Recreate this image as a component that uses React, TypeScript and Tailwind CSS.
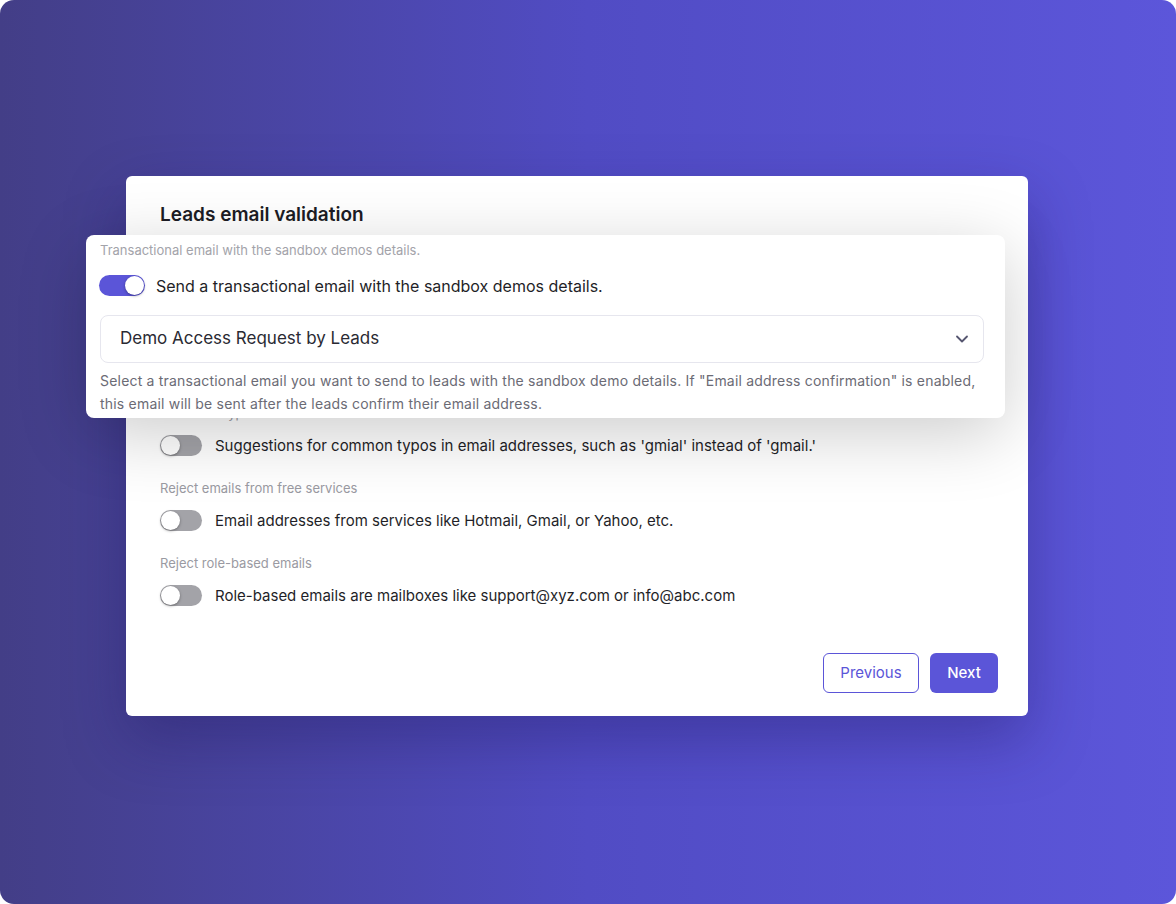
import { ChevronDown } from 'lucide-react'

const font = { fontFamily: 'Inter, "Noto Sans", sans-serif' }

function Toggle({ on }: { on?: boolean }) {
  return (
    <div className={`relative h-[21px] rounded-full shrink-0 ${on ? 'w-[46px] bg-[#5b55d8]' : 'w-[42px] bg-[#a3a3a8]'}`}>
      <div className={`absolute top-px w-[19px] h-[19px] rounded-full bg-white shadow-[0_1px_3px_rgba(0,0,0,0.35)] ${on ? 'right-px' : 'left-px'}`} />
    </div>
  )
}

// first two sit fully under the popup
const sections = [
  { label: 'Email address confirmation', text: 'Leads have to confirm their email address before accessing the sandbox demo.', covered: true },
  { label: 'Block disposable emails', text: 'Temporary email addresses from services like Mailinator or 10minutemail.', covered: true },
  { label: 'Check for typos', text: "Suggestions for common typos in email addresses, such as 'gmial' instead of 'gmail.'" },
  { label: 'Reject emails from free services', text: 'Email addresses from services like Hotmail, Gmail, or Yahoo, etc.' },
  { label: 'Reject role-based emails', text: 'Role-based emails are mailboxes like support@xyz.com or info@abc.com' },
]

export default function App() {
  return (
    <div className="w-[1176px] h-[904px] bg-white" style={font}>
      <div className="w-full h-full rounded-[14px] bg-gradient-to-r from-[#433e87] via-[#514cc4] to-[#5c56da] pt-[176px] pl-[126px]">

        {/* Card */}
        <div className="relative w-[902px] bg-white rounded-md shadow-[0_24px_60px_rgba(30,20,90,0.35)] pl-[34px] pr-[30px] pt-[28px] pb-[23px]">
          <h2 className="text-[19px] font-semibold text-[#1c1c24] leading-[22px]">Leads email validation</h2>

          <div className="mt-[29px] flex flex-col gap-[24px]">
            {sections.map(s => (
              <div key={s.label} className={`flex flex-col gap-[14px] ${s.covered ? 'invisible' : ''}`}>
                <p className="text-[13px] leading-[16px] text-[#9a9aa2]">{s.label}</p>
                <div className="flex items-center gap-[13px]">
                  <Toggle />
                  <span className="text-[15px] leading-[20px] text-[#1f1f28]">{s.text}</span>
                </div>
              </div>
            ))}
          </div>

          <div className="mt-[47px] flex justify-end gap-[11px]">
            <button className="w-[96px] h-[40px] rounded-md border border-[#5b55d8] text-[#5b55d8] text-[15px]">Previous</button>
            <button className="w-[68px] h-[40px] rounded-md bg-[#5b55d8] text-white text-[15px] font-medium">Next</button>
          </div>

          {/* Popup over card */}
          <div className="absolute left-[-40px] top-[59px] w-[919px] h-[183px] bg-white rounded-lg shadow-[0_16px_70px_rgba(0,0,0,0.2)] px-[14px] pt-[7px]">
            <p className="text-[13px] leading-[16px] text-[#a3a3aa]">Transactional email with the sandbox demos details.</p>
            <div className="mt-[17px] flex items-center gap-[11px] -ml-px">
              <Toggle on />
              <span className="text-[16px] leading-[20px] text-[#1f1f28]">Send a transactional email with the sandbox demos details.</span>
            </div>
            <div className="mt-[19px] mr-[7px] h-[48px] rounded-lg border border-[#e6e6ee] flex items-center justify-between pl-[19px] pr-[11px]">
              <span className="text-[17px] text-[#2a2a33]">Demo Access Request by Leads</span>
              <ChevronDown className="w-5 h-5 text-[#565670]" strokeWidth={2.2} />
            </div>
            <p className="mt-[6px] mr-[8px] text-[14px] leading-[23px] tracking-[0.2px] text-[#6b6b75]">
              Select a transactional email you want to send to leads with the sandbox demo details. If "Email address confirmation" is enabled, this email will be sent after the leads confirm their email address.
            </p>
          </div>
        </div>
      </div>
    </div>
  )
}
